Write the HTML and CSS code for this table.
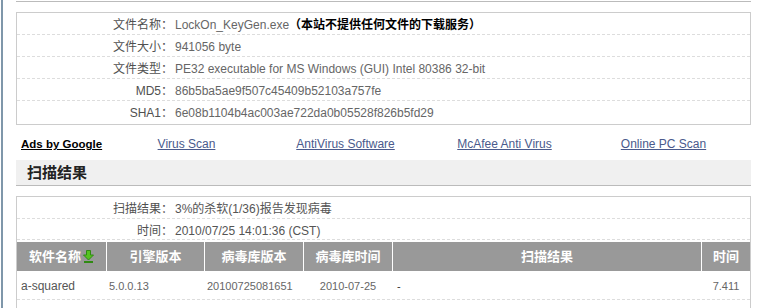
FILE: index.html
```html
<!DOCTYPE html>
<html lang="zh-CN">
<head>
<meta charset="utf-8">
<title>扫描结果</title>
<link rel="stylesheet" href="styles.css">
</head>
<body>
<div class="page">
  <div class="topline"></div>

  <div class="infobox">
    <div class="row"><div class="label">文件名称：</div><div class="value">LockOn_KeyGen.exe<b class="notice">（本站不提供任何文件的下载服务）</b></div></div>
    <div class="row"><div class="label">文件大小：</div><div class="value">941056 byte</div></div>
    <div class="row"><div class="label">文件类型：</div><div class="value">PE32 executable for MS Windows (GUI) Intel 80386 32-bit</div></div>
    <div class="row"><div class="label">MD5：</div><div class="value">86b5ba5ae9f507c45409b52103a757fe</div></div>
    <div class="row last"><div class="label">SHA1：</div><div class="value">6e08b1104b4ac003ae722da0b05528f826b5fd29</div></div>
  </div>

  <div class="ads">
    <div class="ad-cell first"><a class="ads-title" href="#">Ads by Google</a></div>
    <div class="ad-cell"><a href="#">Virus Scan</a></div>
    <div class="ad-cell"><a href="#">AntiVirus Software</a></div>
    <div class="ad-cell"><a href="#">McAfee Anti Virus</a></div>
    <div class="ad-cell"><a href="#">Online PC Scan</a></div>
  </div>

  <div class="section-title">扫描结果</div>

  <div class="resultbox">
    <div class="summary">
      <div class="row"><div class="label">扫描结果：</div><div class="value">3%的杀软(1/36)报告发现病毒</div></div>
      <div class="row short"><div class="label">时间：</div><div class="value">2010/07/25 14:01:36 (CST)</div></div>
    </div>

    <div class="grid head">
      <div class="th">软件名称<svg class="sort" width="11" height="13" viewBox="0 0 11 13"><path d="M3.5 0.5H7.5V5H10.5L5.5 10L0.5 5H3.5Z" fill="#55c21f" stroke="#2f8a12" stroke-width="1"/><rect x="1" y="11" width="9" height="2" fill="#2f8a12"/></svg></div>
      <div class="th">引擎版本</div>
      <div class="th">病毒库版本</div>
      <div class="th">病毒库时间</div>
      <div class="th">扫描结果</div>
      <div class="th">时间</div>
    </div>

    <div class="grid datarow">
      <div class="td name">a-squared</div>
      <div class="td">5.0.0.13</div>
      <div class="td">20100725081651</div>
      <div class="td center">2010-07-25</div>
      <div class="td dash">-</div>
      <div class="td center">7.411</div>
    </div>
    <div class="grid datarow"></div>
  </div>
</div>
</body>
</html>
```

FILE: styles.css
```css
html, body {
  margin: 0;
  padding: 0;
  background: #fff;
}

body {
  font-family: "Liberation Sans", Arial, "Noto Sans CJK SC", sans-serif;
  font-size: 12px;
  color: #555;
}

.page {
  box-sizing: border-box;
  height: 308px;
  margin-left: 1px;
  border-left: 2px solid #7f97aa;
  padding: 0 7px 0 13px;
  overflow: hidden;
}

.topline {
  margin-top: 1px;
  border-bottom: 1px solid #bbb;
}

.infobox {
  margin-top: 10px;
  border: 1px solid #ccc;
}

.row {
  display: flex;
  box-sizing: border-box;
  height: 22px;
  padding-top: 2px;
  line-height: 21px;
  border-bottom: 1px dashed #ddd;
  white-space: nowrap;
}

.row.last {
  height: 23px;
  line-height: 23px;
  padding-top: 1px;
  border-bottom: none;
}

.label {
  width: 156px;
  flex: none;
  text-align: right;
  color: #505050;
}

.value {
  padding-left: 2px;
  color: #666;
}

.notice {
  color: #000;
  font-weight: bold;
}

.ads {
  display: grid;
  grid-template-columns: 91px repeat(4, 159px);
  box-sizing: border-box;
  margin-top: 8px;
  height: 20px;
  padding-top: 1px;
  line-height: 20px;
}

.ad-cell {
  text-align: center;
}

.ad-cell.first {
  text-align: left;
  padding-left: 5px;
}

.ad-cell a {
  color: #4a5a8c;
  text-decoration: underline;
}

.ad-cell a.ads-title {
  color: #000;
  font-weight: bold;
  font-size: 11.5px;
}

.section-title {
  margin-top: 7px;
  height: 25px;
  line-height: 25px;
  background: #f0f0f0;
  border-bottom: 1px solid #bbb;
  padding-left: 11px;
  font-size: 15px;
  font-weight: bold;
  color: #222;
}

.resultbox {
  margin-top: 10px;
  border: 1px solid #ccc;
  border-bottom: none;
}

.summary {
  padding-bottom: 2px;
}

.summary .row.short {
  height: 21px;
  padding-top: 3px;
  line-height: 18px;
}

.summary .value {
  color: #555;
}

.grid {
  display: grid;
  grid-template-columns: 89px 97px 98px 88px 308px 1fr;
  column-gap: 1px;
}

.head {
  height: 29px;
}

.th {
  background: #999;
  color: #fff;
  font-weight: bold;
  font-size: 13px;
  line-height: 29px;
  text-align: center;
  white-space: nowrap;
}

.sort {
  vertical-align: -2px;
  margin-left: 2px;
}

.datarow {
  box-sizing: border-box;
  height: 29px;
  padding-top: 2px;
  line-height: 27px;
  border-bottom: 1px dashed #ddd;
}

.td {
  font-size: 11px;
  color: #666;
  padding-left: 2px;
  white-space: nowrap;
}

.td.name {
  font-size: 12px;
  color: #555;
  padding-left: 4px;
}

.td.dash {
  padding-left: 4px;
  color: #333;
}

.td.center {
  text-align: center;
  padding-left: 0;
}
```
